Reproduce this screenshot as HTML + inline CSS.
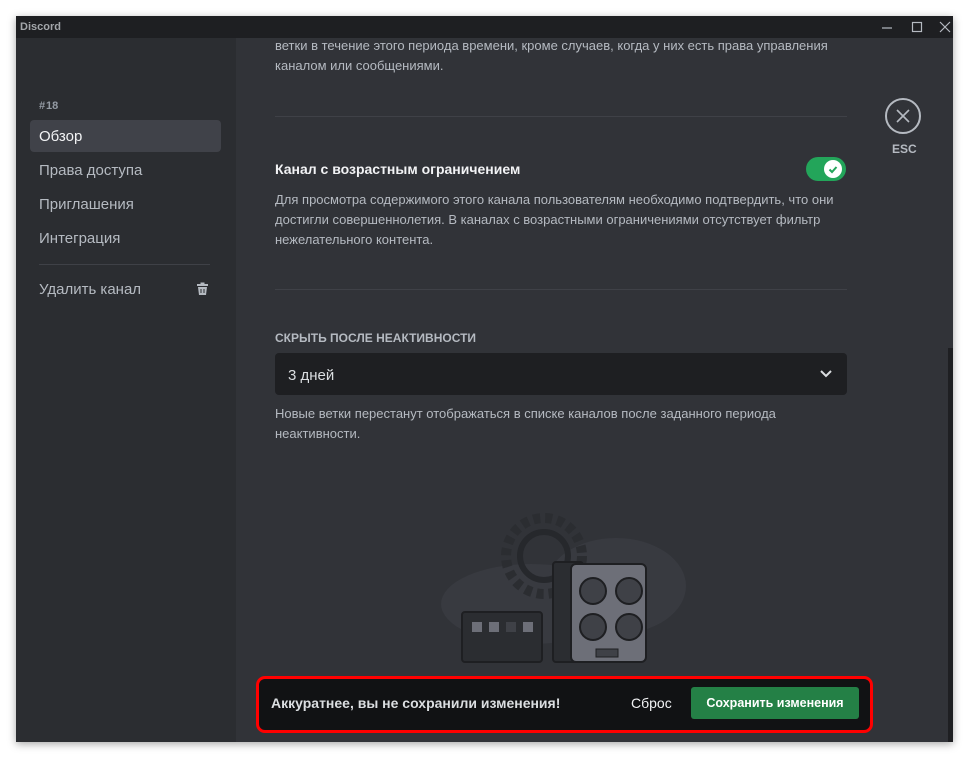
<!DOCTYPE html>
<html><head><meta charset="utf-8"><style>
*{margin:0;padding:0;box-sizing:border-box}
body{width:969px;height:758px;background:#fff;position:relative;overflow:hidden;font-family:"Liberation Sans","DejaVu Sans",sans-serif}
.win{position:absolute;left:16px;top:16px;width:937px;height:726px;background:#313338;overflow:hidden;box-shadow:0 2px 8px rgba(0,0,0,.35)}
.tb{position:absolute;left:0;top:0;width:937px;height:22px;background:#1e1f22}
.tb .t{position:absolute;left:4px;top:5px;font-size:11px;font-weight:bold;color:#a3a6aa}
.side{position:absolute;left:0;top:22px;width:220px;height:704px;background:#2b2d31}
.abs{position:absolute}
.item{position:absolute;left:14px;width:191px;height:32px;border-radius:4px;color:#b5bac1;font-size:15px;padding:8px 9px;line-height:17px}
.txt{color:#b5bac1;font-size:13px;line-height:20px}
.sep{position:absolute;height:1px;background:#3f4147}
</style></head><body>
<div class="win">
<div class="tb"><span class="t">Discord</span>
<svg class="abs" style="left:862px;top:5px" width="75" height="12"><path d="M4 7h10" stroke="#b5bac1" stroke-width="1.2"/><rect x="34.5" y="1.5" width="9" height="9" fill="none" stroke="#b5bac1" stroke-width="1.2"/><path d="M62 1l10 10M72 1l-10 10" stroke="#b5bac1" stroke-width="1.2"/></svg>
</div>
<div class="side">
<div class="abs" style="left:23px;top:62px;font-size:11px;font-weight:bold;color:#949ba4">#&#8202;18</div>
<div class="item" style="top:82px;background:#404249;color:#f2f3f5">Обзор</div>
<div class="item" style="top:116px">Права доступа</div>
<div class="item" style="top:150px">Приглашения</div>
<div class="item" style="top:184px">Интеграция</div>
<div class="sep" style="left:23px;top:226px;width:171px"></div>
<div class="item" style="top:235px">Удалить канал</div>
<svg class="abs" style="left:180px;top:244px" width="13" height="14" viewBox="0 0 13 14"><rect x="1" y="2" width="11" height="2" fill="#b5bac1"/><rect x="4.5" y="0.5" width="4" height="2" fill="#b5bac1"/><path d="M2 5h9l-1 8H3z" fill="#b5bac1"/><path d="M5 7v4M8 7v4" stroke="#2b2d31" stroke-width="1"/></svg>
</div>
<div class="txt abs" style="left:259px;top:20px;width:580px">ветки в течение этого периода времени, кроме случаев, когда у них есть права управления каналом или сообщениями.</div>
<div class="sep" style="left:259px;top:100px;width:572px"></div>
<div class="abs" style="left:259px;top:145px;font-size:14px;font-weight:bold;color:#f2f3f5">Канал с возрастным ограничением</div>
<div class="abs" style="left:790px;top:141px;width:40px;height:24px;border-radius:12px;background:#23a55a"></div>
<div class="abs" style="left:808px;top:144px;width:18px;height:18px;border-radius:9px;background:#fff"></div>
<svg class="abs" style="left:810px;top:146px" width="14" height="14"><path d="M3.5 7.5l2.5 2.5 4.5-5" stroke="#23a55a" stroke-width="2" fill="none"/></svg>
<div class="txt abs" style="left:259px;top:174px;width:580px">Для просмотра содержимого этого канала пользователям необходимо подтвердить, что они достигли совершеннолетия. В каналах с возрастными ограничениями отсутствует фильтр нежелательного контента.</div>
<div class="sep" style="left:259px;top:273px;width:572px"></div>
<div class="abs" style="left:259px;top:315px;font-size:12px;font-weight:bold;color:#b5bac1">СКРЫТЬ ПОСЛЕ НЕАКТИВНОСТИ</div>
<div class="abs" style="left:259px;top:337px;width:572px;height:42px;background:#1e1f22;border-radius:4px"></div>
<div class="abs" style="left:272px;top:351px;font-size:15px;color:#dbdee1">3 дней</div>
<svg class="abs" style="left:803px;top:353px" width="14" height="10"><path d="M2 2l5 5 5-5" stroke="#dbdee1" stroke-width="2" fill="none"/></svg>
<div class="txt abs" style="left:259px;top:388px;width:572px">Новые ветки перестанут отображаться в списке каналов после заданного периода неактивности.</div>
<div class="abs" style="left:869px;top:82px;width:36px;height:36px;border:2px solid #b5bac1;border-radius:50%"></div>
<svg class="abs" style="left:879px;top:92px" width="16" height="16"><path d="M2 2l12 12M14 2L2 14" stroke="#b5bac1" stroke-width="1.6"/></svg>
<div class="abs" style="left:876px;top:126px;font-size:12px;font-weight:bold;color:#b5bac1">ESC</div>
<div class="abs" style="left:932px;top:332px;width:5px;height:394px;background:#1e1f22"></div>
<svg class="abs" style="left:410px;top:490px" width="270" height="160">
<ellipse cx="105" cy="98" rx="90" ry="40" fill="#383a40"/><ellipse cx="190" cy="80" rx="70" ry="48" fill="#383a40"/>
<circle cx="118" cy="50" r="38" fill="none" stroke="#2b2d31" stroke-width="10" stroke-dasharray="7 5"/>
<circle cx="118" cy="50" r="24" fill="none" stroke="#26282c" stroke-width="6"/>
<rect x="36" y="106" width="80" height="50" rx="3" fill="#2b2d31" stroke="#1e1f22" stroke-width="2"/>
<rect x="46" y="116" width="10" height="10" fill="#6d6f78"/><rect x="63" y="116" width="10" height="10" fill="#6d6f78"/><rect x="80" y="116" width="10" height="10" fill="#3f4147"/><rect x="97" y="116" width="10" height="10" fill="#6d6f78"/>
<rect x="127" y="56" width="30" height="100" rx="3" fill="#2b2d31" stroke="#1e1f22" stroke-width="2"/>
<rect x="145" y="58" width="75" height="98" rx="5" fill="#6d6f78" stroke="#1e1f22" stroke-width="2"/>
<circle cx="167" cy="85" r="13" fill="#3f4147" stroke="#1e1f22" stroke-width="2"/><circle cx="203" cy="85" r="13" fill="#3f4147" stroke="#1e1f22" stroke-width="2"/>
<circle cx="167" cy="121" r="13" fill="#3f4147" stroke="#1e1f22" stroke-width="2"/><circle cx="203" cy="121" r="13" fill="#3f4147" stroke="#1e1f22" stroke-width="2"/>
<rect x="170" y="143" width="22" height="8" fill="#3f4147" stroke="#1e1f22"/>
</svg>
<div class="abs" style="left:240px;top:660px;width:617px;height:57px;border:3px solid #ff0000;border-radius:9px;background:#111214"></div>
<div class="abs" style="left:255px;top:679px;font-size:14px;font-weight:bold;color:#dbdee1">Аккуратнее, вы не сохранили изменения!</div>
<div class="abs" style="left:615px;top:679px;font-size:14px;color:#f2f3f5">Сброс</div>
<div class="abs" style="left:675px;top:671px;width:168px;height:32px;background:#248046;border-radius:3px;color:#fff;font-size:12.5px;font-weight:bold;text-align:center;line-height:32px">Сохранить изменения</div>
</div>
</body></html>
